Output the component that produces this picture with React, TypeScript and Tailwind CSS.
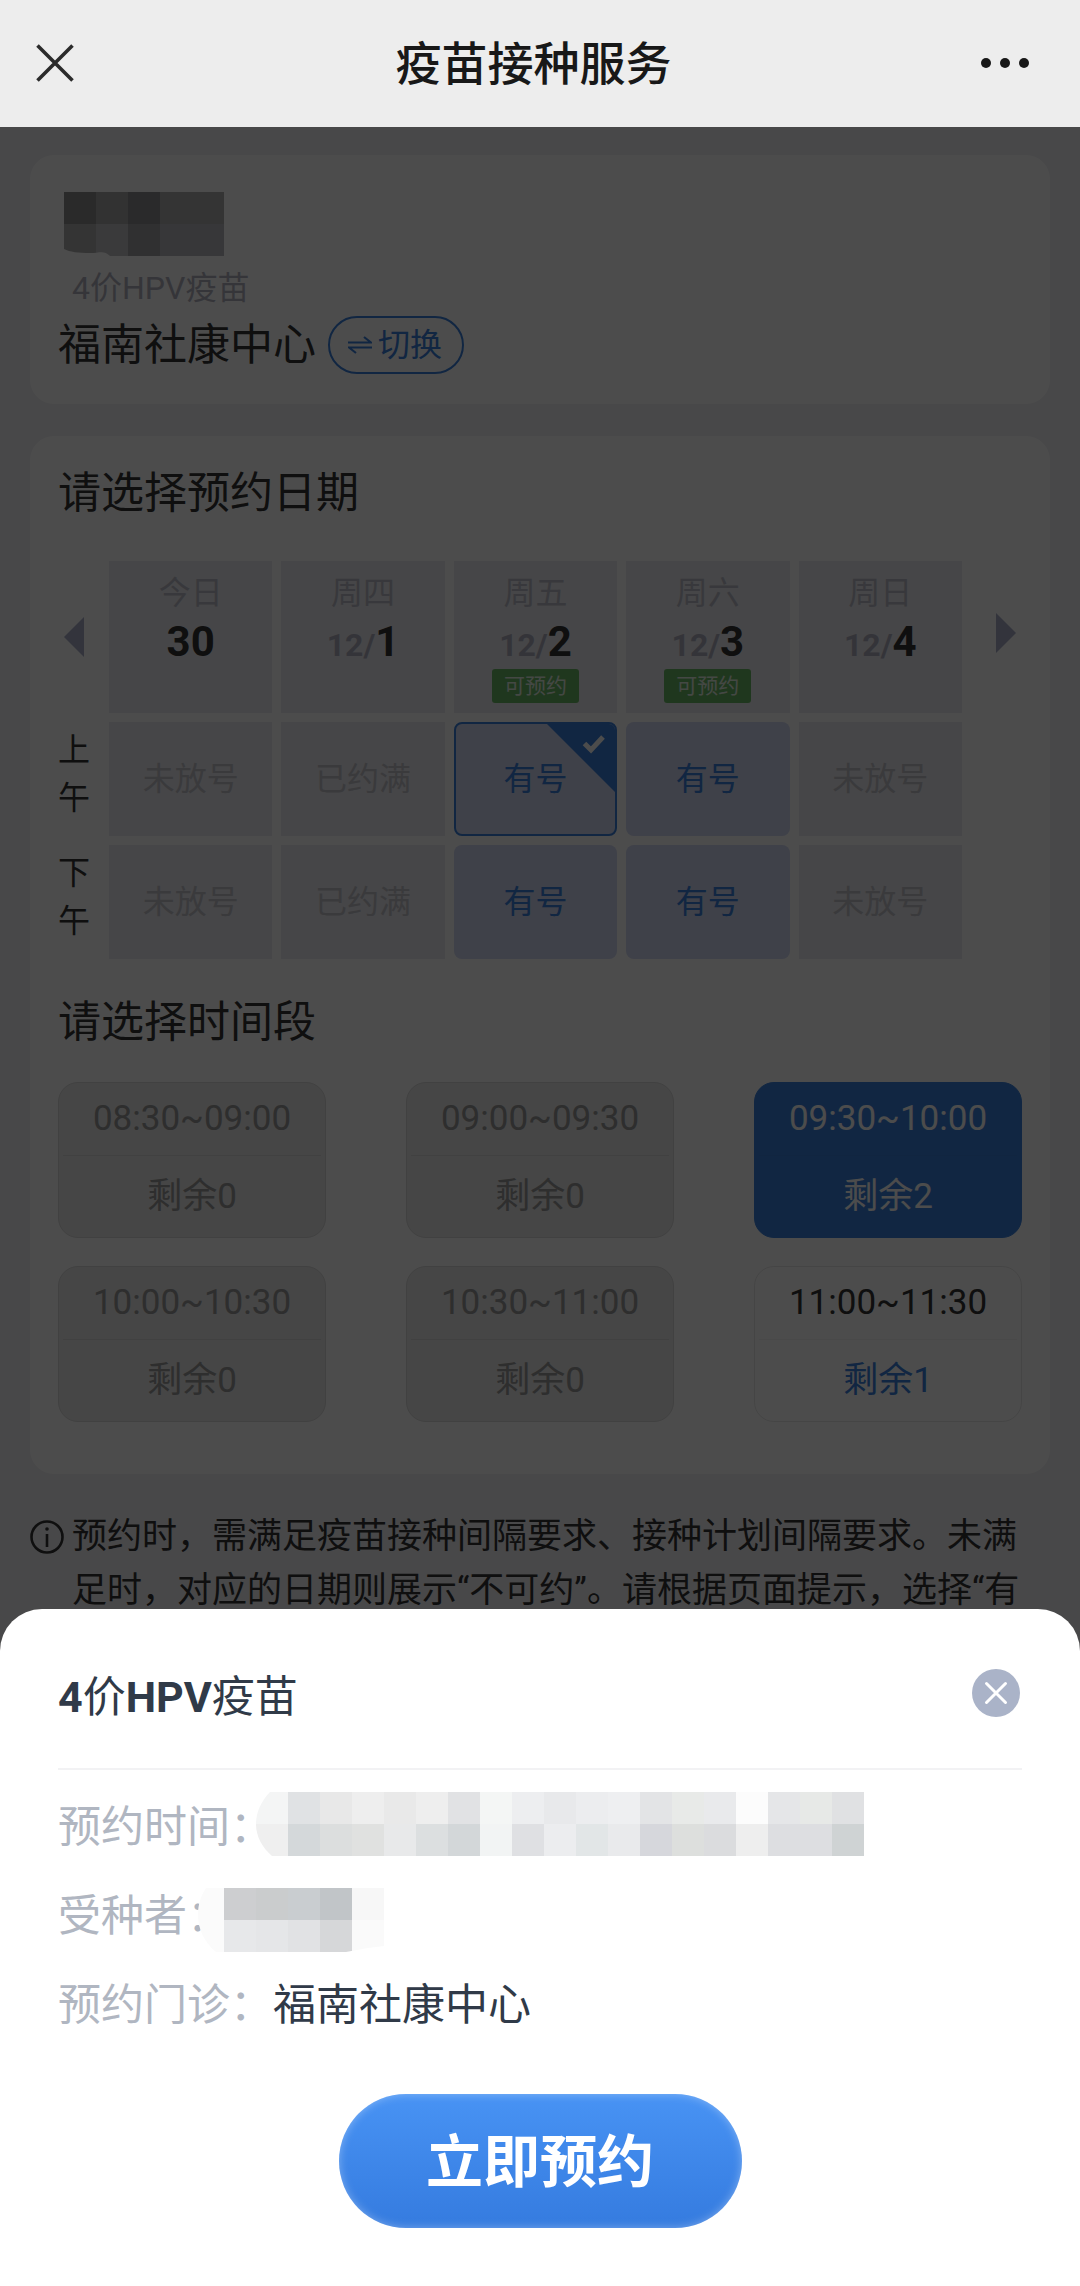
import { useId } from 'react';
import clsx from 'clsx';

type CellState = 'closed' | 'full' | 'open' | 'selected';

type Day = {
  label: string;
  month?: string;
  date: string;
  bookable?: boolean;
  morning: CellState;
  afternoon: CellState;
};

type Slot = {
  time: string;
  left: number;
  selected?: boolean;
};

const days: Day[] = [
  { label: '今日', date: '30', morning: 'closed', afternoon: 'closed' },
  { label: '周四', month: '12/', date: '1', morning: 'full', afternoon: 'full' },
  { label: '周五', month: '12/', date: '2', bookable: true, morning: 'selected', afternoon: 'open' },
  { label: '周六', month: '12/', date: '3', bookable: true, morning: 'open', afternoon: 'open' },
  { label: '周日', month: '12/', date: '4', morning: 'closed', afternoon: 'closed' },
];

const slots: Slot[] = [
  { time: '08:30~09:00', left: 0 },
  { time: '09:00~09:30', left: 0 },
  { time: '09:30~10:00', left: 2, selected: true },
  { time: '10:00~10:30', left: 0 },
  { time: '10:30~11:00', left: 0 },
  { time: '11:00~11:30', left: 1 },
];

const cellText: Record<CellState, string> = {
  closed: '未放号',
  full: '已约满',
  open: '有号',
  selected: '有号',
};

const nameMosaic = [
  ['#8c8c8c', '#a8a8a8', '#8c8c92', '#adadad', '#adadad'],
  ['#b0b0b0', '#c4c4c7', '#a0a0a6', '#bababf', '#bababf'],
];

const timeMosaic = [
  ['#f4f5f5', '#e0e2e4', '#e8e8e8', '#eeeeee', '#e9e9e9', '#eeeeee', '#e1e2e4', '#f4f6f5', '#edeef0', '#e8e9eb', '#ecedef', '#eeeff1', '#e3e4e6', '#e8eae8', '#e9eaec', '#fcfcfc', '#e5e6e8', '#e7e9e7', '#e0e1e3'],
  ['#efefef', '#d4d8da', '#dcdede', '#e0e1e0', '#e8e9ea', '#dcdfe0', '#d3d7d9', '#f2f4f4', '#dfe0e3', '#ecedef', '#e2e6e7', '#e9eaec', '#d6d7dc', '#dddfdd', '#dbdcde', '#eeeeee', '#dddee1', '#dddee1', '#cfd3d4'],
];

const personMosaic = [
  ['#fbfbfb', '#cdced0', '#cacccd', '#c9cdd0', '#c1c5c8', '#f7f7f7'],
  ['#fbfbfb', '#e7e8ea', '#e5e6e8', '#e1e2e4', '#d6d7d9', '#fafafa'],
];

// Pixelated block that hides private details, cut to a hand-drawn outline
function Mosaic({ rows, outline, className }: { rows: string[][]; outline: string; className?: string }) {
  const id = useId();
  const width = rows[0].length * 32;

  return (
    <svg width={width} height={64} viewBox={`0 0 ${width} 64`} className={clsx('shrink-0', className)} aria-hidden="true">
      <clipPath id={id}>
        <path d={outline} />
      </clipPath>
      <g clipPath={`url(#${id})`} shapeRendering="crispEdges">
        {rows.map((row, y) =>
          row.map((fill, x) => <rect key={`${x}-${y}`} x={x * 32} y={y * 32} width={32} height={32} fill={fill} />)
        )}
      </g>
    </svg>
  );
}

function PeriodCell({ state }: { state: CellState }) {
  const available = state === 'open' || state === 'selected';

  return (
    <td className="p-0">
      <button
        type="button"
        disabled={!available}
        className={clsx(
          'relative block h-[114px] w-full overflow-hidden text-[32px]',
          available ? 'rounded-lg bg-[#d2d9f3] text-[#3a80dc]' : 'bg-[#ebebf0] text-[#c2c2ca]',
          state === 'selected' && 'border-2 border-[#3a80dc]'
        )}
      >
        {cellText[state]}
        {state === 'selected' && (
          <svg width="68" height="68" viewBox="0 0 68 68" className="absolute top-0 right-0" aria-hidden="true">
            <path d="M0 0h68v68z" fill="#3a80dc" />
            <path d="M37.500 19.500l6.500 6.500L56 13" fill="none" stroke="#fff" strokeWidth="5" />
          </svg>
        )}
      </button>
    </td>
  );
}

function SlotCard({ slot }: { slot: Slot }) {
  const empty = slot.left === 0;

  return (
    <button
      type="button"
      disabled={empty}
      className={clsx(
        'flex w-[268px] flex-col rounded-[20px] border text-[35px]',
        slot.selected && 'border-[#3a80dc] bg-[#3a80dc] text-white',
        empty && 'border-[#dadada] bg-[#eaeaea] text-[#999999]',
        !empty && !slot.selected && 'border-[#e8e8e8] bg-white text-[#333333]'
      )}
    >
      <span
        className={clsx(
          'mx-1 self-stretch border-b leading-[72px]',
          slot.selected ? 'border-[#3a7cd6]' : empty ? 'border-[#dadada]' : 'border-[#f4f4f4]'
        )}
      >
        {slot.time}
      </span>
      <span className={clsx('self-stretch leading-[81px]', !empty && !slot.selected && 'text-[#3a80dc]')}>
        剩余{slot.left}
      </span>
    </button>
  );
}

function TopBar() {
  return (
    <header className="flex h-[127px] items-center bg-[#ededed] pb-0.5">
      <button type="button" aria-label="关闭" className="px-9">
        <svg width="38" height="38" viewBox="0 0 38 38" fill="none" stroke="#2b2b2b" strokeWidth="3.600">
          <path d="M1.500 1.500l35 35M36.500 1.500l-35 35" />
        </svg>
      </button>
      <h1 className="flex-1 pt-1 text-center text-[46px] font-medium text-[#181818]">疫苗接种服务</h1>
      <button type="button" aria-label="更多" className="pr-[51px] pl-6">
        <svg width="48" height="10" viewBox="0 0 48 10" fill="#181818">
          <circle cx="5" cy="5" r="5" />
          <circle cx="24" cy="5" r="5" />
          <circle cx="43" cy="5" r="5" />
        </svg>
      </button>
    </header>
  );
}

function DateTable() {
  return (
    <table className="-mx-[9px] mt-[27px] w-[calc(100%+18px)] table-fixed border-separate border-spacing-[9px]">
      <thead>
        <tr className="h-[152px]">
          <th className="w-[42px] p-0">
            <button type="button" aria-label="前几天" className="block pl-1.5">
              <svg width="20" height="40" viewBox="0 0 20 40" fill="#aab0c8">
                <path d="M20 0v40L0 20z" />
              </svg>
            </button>
          </th>
          {days.map((day) => (
            <th key={day.label} scope="col" className="bg-[#ebebf0] px-0 pt-[9px] pb-0 align-top font-normal">
              <div className="text-[32px] leading-[46px] text-[#bcbdc8]">{day.label}</div>
              <div className="text-[42px] leading-[52px] font-bold text-[#333333]">
                {day.month && <span className="text-[32px] leading-none text-[#b0b0c0]">{day.month}</span>}
                {day.date}
              </div>
              {day.bookable && (
                <span className="mx-auto mt-px block w-[87px] rounded-[3px] bg-[#6ab866] text-[21px] leading-[34px] text-[#e4f0e4]">
                  可预约
                </span>
              )}
            </th>
          ))}
          <th className="w-[51px] p-0">
            <button type="button" aria-label="后几天" className="ml-auto block pr-1.5 pb-2">
              <svg width="20" height="40" viewBox="0 0 20 40" fill="#aab0c8">
                <path d="M0 0v40l20-20z" />
              </svg>
            </button>
          </th>
        </tr>
      </thead>
      <tbody className="text-[32px]">
        <tr>
          <th scope="row" className="pt-1 pr-2.5 pb-0 pl-0 align-top leading-[48px] font-normal text-[#333333]">
            上午
          </th>
          {days.map((day) => (
            <PeriodCell key={day.label} state={day.morning} />
          ))}
        </tr>
        <tr>
          <th scope="row" className="pt-1 pr-2.5 pb-0 pl-0 align-top leading-[48px] font-normal text-[#333333]">
            下午
          </th>
          {days.map((day) => (
            <PeriodCell key={day.label} state={day.afternoon} />
          ))}
        </tr>
      </tbody>
    </table>
  );
}

function ConfirmSheet() {
  return (
    <section
      role="dialog"
      aria-labelledby="sheet-title"
      className="fixed inset-x-0 bottom-0 rounded-t-[42px] bg-white px-[58px] pb-[58px] text-[43px]"
    >
      <div className="flex h-[161px] items-center justify-between border-b-2 border-[#f2f2f4] pt-2">
        <h2 id="sheet-title" className="pt-2.5 text-[#303a48]">
          <span className="font-bold">4</span>价<span className="font-bold">HPV</span>疫苗
        </h2>
        <button type="button" aria-label="关闭弹窗" className="mr-0.5">
          <svg width="48" height="48" viewBox="0 0 48 48">
            <circle cx="24" cy="24" r="24" fill="#aab3c8" />
            <path d="M14.500 14.500l19 19M33.500 14.500l-19 19" stroke="#fff" strokeWidth="3" strokeLinecap="round" />
          </svg>
        </button>
      </div>

      <dl className="pt-[13px] leading-[89px] text-[#303a48]">
        <div className="flex items-center">
          <dt className="text-[#b0b6c1]">预约时间：</dt>
          <dd>
            <Mosaic
              rows={timeMosaic}
              outline="M14 0H608V64H16C-5 46-5 20 14 0z"
              className="mb-2 -ml-[17px]"
            />
          </dd>
        </div>
        <div className="flex items-center">
          <dt className="text-[#b0b6c1]">受种者：</dt>
          <dd>
            <Mosaic
              rows={personMosaic}
              outline="M14 0H192V58L176 60L154 64H24C2 46 2 18 14 0z"
              className="mt-1.5 -ml-[38px]"
            />
          </dd>
        </div>
        <div className="flex items-center">
          <dt className="text-[#b0b6c1]">预约门诊：</dt>
          <dd>福南社康中心</dd>
        </div>
      </dl>

      <button
        type="button"
        className="mx-auto mt-11 block h-[134px] w-[403px] rounded-full bg-linear-to-b from-[#4893f4] to-[#357bdf] pt-1 text-[57px] font-bold text-white shadow-[inset_0_0_10px_rgba(255,255,255,0.35)]"
      >
        立即预约
      </button>
    </section>
  );
}

export default function App() {
  return (
    <div className="flex min-h-screen flex-col bg-[#f0f0f4] font-[Roboto,'Noto_Sans_CJK_SC',sans-serif]" lang="zh-CN">
      <TopBar />

      <main className="relative flex-1 px-[30px] pt-7 text-[#333333]">
        <section className="rounded-3xl bg-white px-7 pt-[37px] pb-[30px]">
          <Mosaic rows={nameMosaic} outline="M0 0H160V64H46C40 58 36 61 26 61C14 61 6 60 0 57z" className="ml-1.5" />
          <p className="mt-2 pl-3.5 text-[32px] leading-[48px] text-[#b3b3bf]">4价HPV疫苗</p>
          <div className="mt-1 flex items-center gap-3">
            <span className="text-[43px] leading-[58px]">福南社康中心</span>
            <button
              type="button"
              className="flex h-[58px] items-center gap-1.5 rounded-full border-2 border-[#3a80dc] pr-5 pl-[18px] text-[32px] text-[#3a80dc]"
            >
              <svg width="24" height="18" viewBox="0 0 24 18" fill="none" stroke="currentColor" strokeWidth="2.200">
                <path d="M0 6.500h23L16 1M24 11.500H1L8 17" />
              </svg>
              切换
            </button>
          </div>
        </section>

        <section className="mt-8 rounded-3xl bg-white px-7 pt-[25px] pb-[52px]">
          <h2 className="text-[43px] leading-[64px]">请选择预约日期</h2>
          <DateTable />
          <h2 className="mt-[22px] text-[43px] leading-[64px]">请选择时间段</h2>
          <div className="mt-7 flex flex-wrap justify-between gap-y-7">
            {slots.map((slot) => (
              <SlotCard key={slot.time} slot={slot} />
            ))}
          </div>
        </section>

        <div className="mt-9 flex items-start gap-2 pr-6 text-[35px] leading-[54px]">
          <svg width="34" height="54" viewBox="0 0 34 54" fill="none" stroke="#333" strokeWidth="2.600" className="shrink-0">
            <circle cx="17" cy="27" r="15.500" />
            <path d="M17 24v13" />
            <circle cx="17" cy="19" r="1.800" fill="#333" stroke="none" />
          </svg>
          <p>预约时，需满足疫苗接种间隔要求、接种计划间隔要求。未满足时，对应的日期则展示“不可约”。请根据页面提示，选择“有</p>
        </div>

        <div className="absolute inset-0 bg-black/70" />
      </main>

      <ConfirmSheet />
    </div>
  );
}
